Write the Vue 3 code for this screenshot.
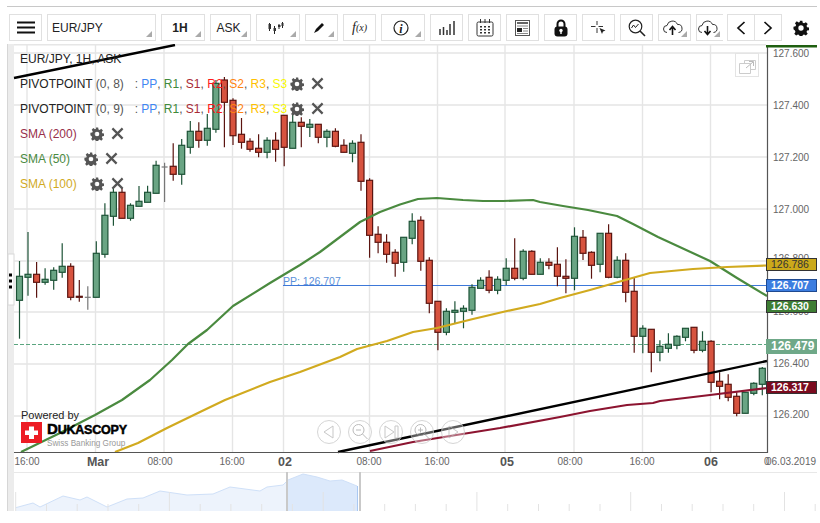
<script setup>
const raw = [
[276.3,300.3,261,338.7,'g'],[274.3,277.3,232,295.7,'g'],[274.3,282.3,262,297.7,'r'],[279.3,282.3,268.3,284.7,'g'],
[270.3,280.3,267.3,289.7,'g'],[266.3,272.3,243.3,277.7,'g'],[266.3,297.3,263.3,300.3,'r'],[296.3,297.3,280,301.7,'r'],
[297.3,297.3,286.3,309.7,'d'],[253.3,297.3,241.3,297.3,'g'],[215.3,254.3,203.3,257.7,'g'],[192.3,216.3,188,225.7,'g'],
[192.3,218.3,188,218.3,'r'],[205.3,218.3,203.3,220.7,'g'],[201.3,206.3,186,206.3,'g'],[192.3,202.3,185.7,202.3,'g'],
[165.3,193.3,160.7,193.3,'g'],[167,167,162.7,202,'d'],[166.3,174.3,143.3,180.7,'r'],[145.3,174.3,139,184.7,'g'],
[131.3,147.3,121,153.7,'g'],[131.3,140.3,122.3,147.7,'r'],[128.3,140.3,114,145.7,'g'],[83.3,129.3,80,132.7,'g'],
[80,102.3,77,147.3,'r'],[100.3,135.7,98.3,145,'r'],[134.3,142.3,118,148.7,'r'],[141.3,149.3,138.3,151.7,'r'],
[148.3,152.3,134.3,157.3,'r'],[140.3,152.3,137.3,158.3,'g'],[140.3,149.3,132.3,161.7,'r'],[115.3,147.3,115.3,166.3,'r'],
[122.3,148.3,113,148.3,'g'],[122.3,126.3,117.3,147.3,'r'],[124.3,127.3,119,137,'g'],[124.3,137.3,124.3,143.3,'r'],
[131.3,137.3,129.3,147.3,'g'],[131.3,146.3,128.3,147.3,'r'],[145.3,152.3,139.3,152.3,'r'],[143.3,153.3,140.3,162.3,'g'],
[142.3,181.3,134.3,190.7,'r'],[180.3,235.3,178.3,257.7,'r'],[234.3,242.3,226.3,253.3,'r'],[242.3,254.3,234.3,262.7,'r'],
[252.3,263.3,249.3,276.7,'r'],[237.3,262.3,237.3,271.7,'g'],[221.3,238.3,213.3,244.3,'g'],[220.3,261.3,216.3,270.7,'r'],
[260.3,303.3,257.3,313.3,'r'],[301.3,332.3,301.3,350.3,'r'],[311.3,332.3,308.3,335.3,'g'],[310.3,312.3,301.3,323.3,'g'],
[308.3,311.3,305.3,328.3,'g'],[287.3,310.3,284.3,314.7,'g'],[280.3,288.3,277.3,288.3,'g'],[277.3,290.3,270.3,293.3,'r'],
[279.3,290.3,276.3,294.3,'g'],[268.3,280.3,258.3,285.3,'g'],[268.3,278.3,238.3,280.3,'r'],[251.3,278.3,249.3,280.3,'g'],
[251.3,274.3,250.3,274.3,'r'],[262.3,274.3,258.3,274.3,'g'],[262.3,265.3,258.3,269.3,'r'],[264.3,276.3,247.3,286.3,'r'],
[276.3,278.3,259.3,293.3,'r'],[236.3,278.3,227.3,290.3,'g'],[237.3,253.3,230,260,'r'],[252.3,265.3,251.3,278.7,'r'],
[233.3,264.3,233.3,272.3,'g'],[233.3,277.3,224.3,278.3,'r'],[260.3,277.3,256.3,278.3,'g'],[260.3,292.3,253.3,302.3,'r'],
[291.3,336.3,277.3,352.7,'r'],[328.3,336.3,325.3,353.3,'g'],[329.3,352.3,329.3,372.3,'r'],[346.3,352.3,340.3,361.3,'g'],
[344.3,348.3,333.3,352.7,'g'],[336.3,345.3,335.3,349.3,'g'],[328.3,337.3,328.3,341.3,'g'],[327.3,350.3,327.3,353.3,'r'],
[341.3,350.3,331.3,352.3,'g'],[341.3,382.3,340.3,392.3,'r'],[381.3,386.3,372.3,399.3,'r'],[384.3,397.3,374.3,401.3,'r'],
[396.3,413.3,392.3,416.3,'r'],[392.3,413.3,392.3,413.3,'g'],[383.3,393.3,382.3,395.3,'g'],[368.3,384.3,367,395.3,'g']
]
const candles = raw.map((c, i) => ({ x: +(19.5 + 8.538 * i).toFixed(1), t: c[0], b: c[1], wt: c[2], wb: c[3], k: c[4] }))
const pts = a => a.map(p => p.join(',')).join(' ')
const sma50 = pts([[21,452],[60,433],[95,415],[122,400],[150,380],[172,360],[188,344],[207,330],[233,306],[270,283],[300,265],[320,252],[340,237],[360,222],[380,212],[400,204.5],[418,199],[437,198],[463,200],[483,201],[503,201],[533,200],[540,202],[563,206],[588,210],[617,216],[633,224],[658,237],[710,261],[737,278],[767,296]])
const sma100 = pts([[115,452],[138,443],[167,428],[200,412],[225,400],[270,382],[300,372],[340,357],[357,349],[387,341],[413,332],[437,328],[473,319],[507,311],[540,304],[560,298],[590,290],[650,273],[693,269],[727,267],[767,265.5]])
const sma200 = pts([[370,451],[413,442],[450,436],[500,428],[560,417],[590,411],[627,405],[653,403],[660,401],[710,395],[767,388]])
const vgrid = [27, 95.5, 164, 232.5, 283.5, 369.5, 437.5, 505, 574, 642.5, 710.5]
const hgrid = [53, 105, 157, 209, 261, 312, 364, 416]
const prices = [['127.600',57],['127.400',109],['127.200',161],['127.000',213],['126.800',262],['126.600',315],['126.400',367],['126.200',418]]
const times = [['16:00',27,0],['Mar',98,1],['08:00',160,0],['16:00',232,0],['02',285,1],['08:00',369,0],['16:00',437,0],['05',507,1],['08:00',570,0],['16:00',642,0],['06',711,1]]
const ticks = Array.from({ length: 27 }, (_, i) => ({ x: +(15.7 + 30.75 * i).toFixed(1), long: i % 5 === 0 }))
const mini = [[15.7,507.7],[33,503],[40,507],[63,496],[80,500],[87,497],[107,507],[127,499],[143,498],[160,491],[187,495],[213,494],[230,487],[260,491],[267,487],[283,485],[288,480],[303,474],[317,477],[330,481],[342,480],[357,486]]
const miniAll = 'M' + pts(mini) + ' V511 H15.7 Z'
const miniSel = 'M' + pts(mini.slice(16)) + ' V511 H288 Z'
const miniTop = pts(mini)
const pivots = ['8', '9']
const levels = [['PP','lp'],['R1','r1'],['S1','s1'],['R2','r2'],['S2','s2'],['R3','r3'],['S3','s3']]
const smas = [['SMA (200)','s200','w200'],['SMA (50)','s50','w50'],['SMA (100)','s100','w200']]
const tags = [['126.786','t-yellow'],['126.707','t-blue'],['126.630','t-green'],['126.479','t-pale'],['126.317','t-red']]
</script>

<template>
  <div class="page">
    <svg class="defs" width="0" height="0">
      <symbol id="gear" viewBox="0 0 24 24">
        <path d="M10 1h4l.6 3.2 2 .8 2.7-1.8 2.8 2.8-1.800 2.700.8 2 3.200.6v4l-3.200.6-.8 2 1.800 2.700-2.800 2.800-2.700-1.800-2 .8-.6 3.200h-4l-.6-3.200-2-.8-2.700 1.800-2.800-2.800 1.800-2.700-.8-2L.7 14v-4l3.200-.6.8-2L2.900 4.700l2.800-2.800 2.700 1.800 2-.8zM12 8a4 4 0 1 0 0 8 4 4 0 0 0 0-8z" fill-rule="evenodd"/>
      </symbol>
      <symbol id="cross" viewBox="0 0 14 14">
        <path d="M1.500 1.500l11 11M12.500 1.500l-11 11" stroke="#555" stroke-width="2.400" fill="none"/>
      </symbol>
    </svg>
    <div class="rule"></div>
    <div class="toolbar">
      <div class="btn w33"><svg width="18" height="13"><path d="M0 1.500h18M0 6.500h18M0 11.500h18" stroke="#111" stroke-width="2"/></svg></div>
      <div class="btn pair"><span>EUR/JPY</span><i class="tri"></i></div>
      <div class="btn w44 strong"><span>1H</span><i class="tri"></i></div>
      <div class="btn w41"><span>ASK</span><i class="tri"></i></div>
      <div class="btn w44"><svg class="up" width="16" height="13"><path d="M1.500 2v8M6.500 5v8M11 3v5M14.500 1v6" stroke="#222" stroke-width="1"/><path d="M0.500 3h2.500v5H0.500zM5.500 7h2.500v3H5.500zM10 4h2.500v2H10zM13.500 2h2v3h-2z" fill="#333"/></svg><i class="tri"></i></div>
      <div class="btn w33"><svg class="up" width="13" height="13"><path d="M1 12l2-4 6-6 2 2-6 6z" fill="#111"/></svg><i class="tri"></i></div>
      <div class="btn w33 fx"><span class="f">f</span><span class="x">(x)</span></div>
      <div class="btn w44"><svg class="up" width="16" height="16"><circle cx="8" cy="8" r="7" fill="none" stroke="#222" stroke-width="1.200"/><text x="8" y="12.500" text-anchor="middle" class="ii">i</text></svg><i class="tri"></i></div>
      <div class="btn w33"><svg width="16" height="14"><path d="M1 8v6M4.500 6v8M8 9v5M11 3v11M15 0v14" stroke="#333" stroke-width="1.500"/></svg></div>
      <div class="btn w33"><svg width="18" height="18"><rect x="1" y="3" width="16" height="14" rx="1.500" fill="none" stroke="#333"/><path d="M4.500 0v4M9 0v4M13.500 0v4" stroke="#333"/><path d="M4 7h2v1.500H4zM8 7h2v1.500H8zM12 7h2v1.500h-2zM4 10h2v1.500H4zM8 10h2v1.500H8zM12 10h2v1.500h-2zM4 13h2v1.500H4zM8 13h2v1.500H8zM12 13h2v1.500h-2z" fill="#333"/></svg></div>
      <div class="btn w33"><svg width="15" height="16"><rect x=".5" y=".5" width="14" height="15" fill="#fff" stroke="#555"/><path d="M2 3h11" stroke="#333" stroke-width="1.500"/><path d="M2 6h11M8 8.500h5M8 11h5M2 13.500h11" stroke="#888"/><rect x="2" y="8" width="5" height="4" fill="#222"/></svg></div>
      <div class="btn w33"><svg width="14" height="18"><path d="M3.500 8V5a3.500 3.500 0 0 1 7 0v3" fill="none" stroke="#111" stroke-width="2"/><rect x="0.500" y="7.500" width="13" height="10" rx="3" fill="#111"/><circle cx="7" cy="11.500" r="1.700" fill="#fff"/><path d="M6.300 12h1.400v3H6.300z" fill="#fff"/></svg></div>
      <div class="btn w33"><svg width="16" height="16"><path d="M6 1v4M6 8v5M0 6.500h4.500M7.500 6.500h4.500" stroke="#333"/><path d="M8.500 8l6 2.500-2.500 1-1 2.500z" fill="#222"/></svg></div>
      <div class="btn w33"><svg width="18" height="18"><circle cx="7.500" cy="7.500" r="6.300" fill="none" stroke="#222" stroke-width="1.200"/><path d="M3.500 9l2-3 2 2.500 3-3.500" fill="none" stroke="#222"/><path d="M12 12l5 5" stroke="#222" stroke-width="1.600"/></svg></div>
      <div class="btn w33"><svg class="up" width="20" height="16"><path d="M4 12.500a3.500 3.500 0 0 1 0-7 5.500 5.500 0 0 1 10.500-1 4 4 0 0 1 1 8" fill="none" stroke="#333"/><path d="M9.500 15V8M6.500 10l3-3.500 3 3.500" fill="none" stroke="#111" stroke-width="1.600"/></svg><i class="tri"></i></div>
      <div class="btn w27"><svg class="up" width="20" height="16"><path d="M4 12.500a3.500 3.500 0 0 1 0-7 5.500 5.500 0 0 1 10.500-1 4 4 0 0 1 1 8" fill="none" stroke="#333"/><path d="M9.500 6v8M6.500 11l3 3.500 3-3.500" fill="none" stroke="#111" stroke-width="1.600"/></svg><i class="tri"></i></div>
      <div class="nav-pair">
        <div class="btn w28 flat"><svg width="10" height="14"><path d="M8.500 1L2 7l6.500 6" fill="none" stroke="#111" stroke-width="1.700"/></svg></div>
        <div class="btn w28 flat"><svg width="10" height="14"><path d="M1.500 1L8 7l-6.500 6" fill="none" stroke="#111" stroke-width="1.700"/></svg></div>
      </div>
      <div class="settings"><svg width="16" height="16" class="black"><use href="#gear"/></svg></div>
    </div>

    <div class="chart">
      <svg class="plot" width="820" height="479" viewBox="0 44 820 479">
        <rect x="8" y="44" width="6" height="467" fill="#ececec"/>
        <path d="M7.500 44V511" stroke="#d6d6d6"/>
        <rect x="8" y="254" width="6" height="51" fill="#fff" stroke="#d8d8d8"/>
        <rect x="9" y="273.500" width="3" height="3" fill="#000"/>
        <rect x="9" y="279.500" width="3" height="3" fill="#000"/>
        <rect x="9" y="285.500" width="3" height="3" fill="#000"/>
        <rect x="14" y="43.500" width="752" height="2" fill="#e6e6e6"/>
        <g stroke="#e5e5e5" stroke-width="1.400">
          <line v-for="x in vgrid" :key="'v'+x" :x1="x" :x2="x" y1="45" y2="452"/>
          <line v-for="y in hgrid" :key="'h'+y" x1="14" x2="767" :y1="y" :y2="y"/>
        </g>
        <line x1="14" y1="344.500" x2="767" y2="344.500" stroke="#5aa57f" stroke-dasharray="4 2"/>
        <line x1="283" y1="285.500" x2="767" y2="285.500" stroke="#3d78d8" stroke-width="1.200"/>
        <g v-for="c in candles" :key="c.x" :class="'c-'+c.k">
          <line class="wick" :x1="c.x" :x2="c.x" :y1="c.wt" :y2="c.wb"/>
          <line v-if="c.k==='d'" class="wick" :x1="c.x-3" :x2="c.x+3" :y1="c.t" :y2="c.t"/>
          <rect v-else class="body" :x="c.x-3" :y="c.t" width="6" :height="c.b-c.t"/>
        </g>
        <polyline :points="sma50" class="line" stroke="#4a8a3f"/>
        <polyline :points="sma100" class="line" stroke="#d1aa1f"/>
        <polyline :points="sma200" class="line" stroke="#8c1430"/>
        <line x1="14" y1="78" x2="175" y2="45" stroke="#000" stroke-width="2.400"/>
        <line x1="338" y1="452" x2="767" y2="361" stroke="#000" stroke-width="2.400"/>
        <text x="283" y="285" class="pplabel">PP: 126.707</text>
        <path d="M14 452.500H767.500V46" fill="none" stroke="#555" stroke-width="1.200"/>
        <rect x="766" y="45" width="51" height="2.500" fill="#1f5f10"/>
        <text v-for="p in prices" :key="p[0]" x="773" :y="p[1]" class="ax">{{ p[0] }}</text>
        <text v-for="t in times" :key="t[0]+t[1]" :x="t[1]" :y="t[2] ? 466 : 465" text-anchor="middle" :class="t[2] ? 'tb' : 'ax'">{{ t[0] }}</text>
        <text x="764" y="465" class="ax">0</text>
        <text x="766" y="465" class="ax">06.03.2019</text>
        <path d="M14 472.500H817" stroke="#e8e8e8"/>
        <path :d="miniAll" fill="#edf3fc"/>
        <path :d="miniSel" fill="#dce9fb"/>
        <polyline :points="miniTop" fill="none" stroke="#cfe0f8"/>
        <path d="M357.500 486V511" stroke="#a9c8f2"/>
        <g stroke="#e3e3e3">
          <line v-for="t in ticks" :key="t.x" :x1="t.x" :x2="t.x" :y1="t.long ? 492 : 504" y2="511"/>
        </g>
        <rect x="286" y="472" width="2" height="39" fill="#c9c9c9"/>
        <rect x="359" y="472" width="2" height="39" fill="#c9c9c9"/>
      </svg>

      <div class="legend">
        <div class="row">EUR/JPY, 1H, ASK</div>
        <div v-for="n in pivots" :key="n" class="row">
          <span class="pname">PIVOTPOINT <span class="muted">(0, {{ n }})</span></span>
          <span class="colon">:</span>
          <template v-for="(l, i) in levels" :key="l[0]">
            <span :class="l[1]">{{ l[0] }}</span><span v-if="i < 6" class="comma">, </span>
          </template>
          <svg class="g g1" width="14" height="14"><use href="#gear"/></svg>
          <svg class="k" width="13" height="13"><use href="#cross"/></svg>
        </div>
        <div v-for="s in smas" :key="s[0]" class="row">
          <span :class="[s[1], s[2]]">{{ s[0] }}</span>
          <svg class="g" width="14" height="14"><use href="#gear"/></svg>
          <svg class="k" width="13" height="13"><use href="#cross"/></svg>
        </div>
      </div>

      <div class="popout">
        <svg width="17" height="17"><path d="M5.500 3.500h11v9h-11z" fill="none" stroke="#ccc"/><path d="M.5 6.500h11v10H.5z" fill="#fff" stroke="#ccc"/><path d="M7 11l7-6M10 4.500h4.500V9" fill="none" stroke="#bbb"/></svg>
      </div>

      <div class="logo">
        <div class="powered">Powered by</div>
        <div class="brand">
          <svg width="21" height="21"><rect width="21" height="21" fill="#ed1c24"/><path d="M8 4.500h5V8.500h4V13h-4v4H8v-4H4V8.500h4z" fill="#fff"/></svg>
          <div class="names">
            <div class="duka">D<span>UKASCOPY</span></div>
            <div class="swiss">Swiss Banking Group</div>
          </div>
        </div>
      </div>

      <div class="navs">
        <div class="round"><svg width="24" height="24"><path d="M16 6L7 12l9 6z" fill="none" stroke="#bbb"/></svg></div>
        <div class="round"><svg width="24" height="24"><circle cx="10.500" cy="10" r="5.500" fill="none" stroke="#aaa"/><path d="M8 10h5M14.500 14l5 5" stroke="#aaa"/></svg></div>
        <div class="round"><svg width="24" height="24"><path d="M6 6l9 6-9 6zM16 6h3v12h-3z" fill="none" stroke="#bbb"/></svg></div>
        <div class="round"><svg width="24" height="24"><circle cx="10.500" cy="10" r="5.500" fill="none" stroke="#aaa"/><path d="M8 10h5M10.500 7.500v5M14.500 14l5 5" stroke="#aaa"/></svg></div>
        <div class="round"><svg width="24" height="24"><path d="M8 6l9 6-9 6z" fill="none" stroke="#bbb"/></svg></div>
      </div>

      <div class="tags">
        <div v-for="t in tags" :key="t[0]" class="tag" :class="t[1]">{{ t[0] }}</div>
      </div>
    </div>
  </div>
</template>

<style scoped>
.page { width: 820px; height: 523px; overflow: hidden; background: #fff; font-family: "Liberation Sans", Arial, sans-serif; color: #222; }
.defs { position: absolute; }
.rule { height: 1px; margin: 6px 3px 0 7px; background: #c8c8c8; }
.toolbar { display: flex; gap: 5px; height: 27px; margin: 7px 0 0 9px; }
.btn { position: relative; box-sizing: border-box; height: 27px; border: 1px solid #e0e0e0; display: flex; align-items: center; justify-content: center; font-size: 12px; background: #fff; flex: none; color: #222; }
.w33 { width: 33px; } .w44 { width: 44px; } .w41 { width: 41px; } .w27 { width: 27px; border-right: 0; } .w28 { width: 28px; }
.up { margin-right: 4px; }
.pair { width: 109px; justify-content: flex-start; padding-left: 4px; }
.strong { font-weight: bold; padding-right: 6px; }
.w41 span { margin-right: 4px; }
.tri { position: absolute; right: 3px; bottom: 3px; width: 0; height: 0; border-left: 6px solid transparent; border-bottom: 6px solid #aaa; }
.fx { font-family: "Liberation Serif", serif; font-style: italic; color: #222; }
.fx .f { font-size: 14px; } .fx .x { font-size: 10px; }
.ii { font: italic bold 12px "Liberation Serif", serif; fill: #222; }
.nav-pair { display: flex; margin-left: -1px; }
.flat + .flat { margin-left: -1px; }
.settings { display: flex; align-items: center; margin-left: 6px; }
.black { fill: #111; }
.chart { position: relative; height: 479px; margin-top: 3px; }
.plot { display: block; }
.wick { stroke-width: 1.200; }
.body { stroke-width: 1.200; }
.c-g .wick, .c-g .body { stroke: #1d5337; }
.c-g .body { fill: #6aa584; }
.c-r .wick, .c-r .body { stroke: #5b1410; }
.c-r .body { fill: #d7533f; }
.c-d .wick { stroke: #777; }
.line { fill: none; stroke-width: 2.200; stroke-linejoin: round; }
.pplabel { font-size: 10.500px; fill: #5b8fd9; }
.ax { font-size: 10px; fill: #666; }
.tb { font-size: 12.500px; font-weight: bold; fill: #555; }
.legend { position: absolute; left: 20px; top: 2px; font-size: 12px; color: #222; }
.row { display: flex; align-items: center; height: 25px; white-space: pre; }
.muted { color: #555; }
.colon { margin-left: 11px; margin-right: 3px; color: #555; }
.comma { color: #555; }
.lp { color: #3f86f2; }
.r1 { color: #3f8a3a; } .s1 { color: #a82a35; } .r2 { color: #ff1a1a; } .s2 { color: #ff8210; } .r3 { color: #ffc000; } .s3 { color: #f8f800; }
.s200 { color: #98304a; } .s50 { color: #4a8a3f; } .s100 { color: #d1aa1f; }
.w200 { width: 70px; } .w50 { width: 64px; }
.g { fill: #555; flex: none; }
.g1 { margin-left: 3px; }
.k { flex: none; margin-left: 7px; }
.popout { position: absolute; left: 735px; top: 9px; width: 24px; height: 24px; box-sizing: border-box; border: 1px solid #e4e4e4; display: flex; align-items: center; justify-content: center; background: #fff; }
.logo { position: absolute; left: 21px; top: 365px; }
.powered { font-size: 11px; line-height: 13px; color: #222; }
.brand { display: flex; gap: 5px; }
.duka { font-size: 15px; line-height: 14px; font-weight: bold; color: #000; letter-spacing: -0.200px; -webkit-text-stroke: 0.500px #000; }
.duka span { font-size: 12.500px; }
.swiss { font-size: 8.200px; line-height: 10px; color: #999; margin-top: 2px; }
.navs { position: absolute; left: 317px; top: 376px; display: flex; gap: 7px; opacity: .8; }
.round { width: 24px; height: 24px; box-sizing: border-box; border: 1px solid #ccc; border-radius: 50%; display: flex; align-items: center; justify-content: center; background: rgba(255,255,255,.45); }
.round svg { flex: none; }
.tags { position: absolute; left: 766px; top: 214px; width: 51px; display: flex; flex-direction: column; }
.tag { box-sizing: border-box; height: 13px; line-height: 11px; font-size: 10.500px; padding-left: 4px; border: 1px solid #333; color: #fff; font-weight: bold; }
.t-yellow { background: #cba91a; color: #333; font-weight: normal; }
.t-blue { margin-top: 8px; background: #3b7de0; border-color: #1f4a90; }
.t-green { margin-top: 8px; background: #3e7d34; }
.t-pale { margin-top: 26px; height: 15px; line-height: 15px; background: #6fa888; border: 0; font-size: 12px; padding-left: 5px; }
.t-red { margin-top: 27px; background: #7a0b1f; }
</style>
